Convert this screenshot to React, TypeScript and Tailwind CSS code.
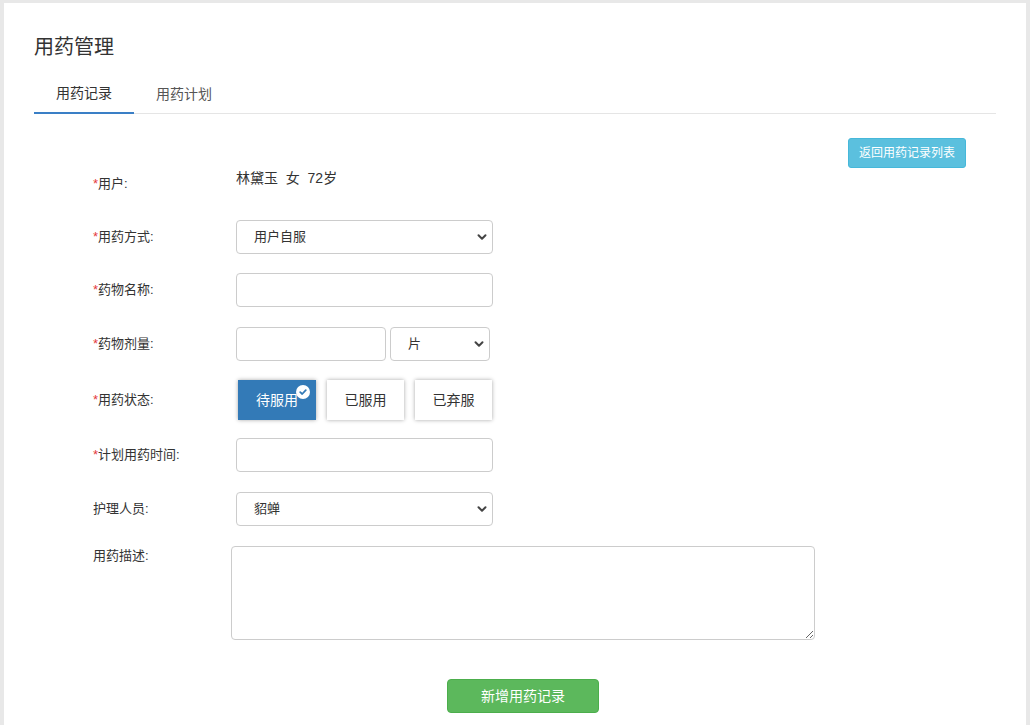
import React from "react";

const font = { fontFamily: '"Liberation Sans", "Noto Sans CJK SC", sans-serif' };

function Chevron() {
  return (
    <svg width="10" height="10" viewBox="0 0 10 10" className="pointer-events-none absolute right-[6px] top-1/2 -translate-y-1/2">
      <path d="M1.5 3.2 L5 6.7 L8.5 3.2" fill="none" stroke="#444" strokeWidth="2" strokeLinecap="round" strokeLinejoin="round" />
    </svg>
  );
}

function Label({ text, req = true }: { text: string; req?: boolean }) {
  return (
    <div className="w-[143px] shrink-0 text-[13px] text-[#333] leading-[20px]">
      {req && <span className="text-[#e4393c]">*</span>}
      {text}:
    </div>
  );
}

function Select({ value, w }: { value: string; w: string }) {
  return (
    <div className={`relative ${w} h-full`}>
      <div className="h-full w-full rounded-[4px] border border-[#ccc] bg-white pl-[17px] flex items-center text-[13px] text-[#333]">
        {value}
      </div>
      <Chevron />
    </div>
  );
}

export default function App() {
  return (
    <div className="min-h-[725px] w-full bg-[#e8e8e8] pt-[3px] px-[4px]" style={font}>
      <div className="min-h-[722px] bg-white px-[30px] pt-[30px]">
        <h1 className="text-[20px] leading-[28px] text-[#333]">用药管理</h1>
        <div className="mt-[13px] flex border-b border-[#e5e5e5]">
          <div className="-mb-px w-[100px] h-[40px] flex items-center justify-center border-b-[2px] border-[#3a7fc6] text-[14px] text-[#333]">
            用药记录
          </div>
          <div className="-mb-px w-[100px] h-[40px] flex items-center justify-center text-[14px] text-[#555]">
            用药计划
          </div>
        </div>

        <div className="flex">
          <div className="flex-1 pl-[59px] pt-[53px]">
            {/* 用户 */}
            <div className="flex items-center h-[34px]">
              <Label text="用户" />
              <div className="-mt-[12px] text-[14px] text-[#333] whitespace-pre">林黛玉  女  72岁</div>
            </div>
            {/* 用药方式 */}
            <div className="flex items-center h-[34px] mt-[19px]">
              <Label text="用药方式" />
              <Select value="用户自服" w="w-[257px]" />
            </div>
            {/* 药物名称 */}
            <div className="flex items-center h-[34px] mt-[19px]">
              <Label text="药物名称" />
              <input className="h-full w-[257px] rounded-[4px] border border-[#ccc] bg-white outline-none" />
            </div>
            {/* 药物剂量 */}
            <div className="flex items-center h-[34px] mt-[20px]">
              <Label text="药物剂量" />
              <input className="h-full w-[150px] rounded-[4px] border border-[#ccc] bg-white outline-none" />
              <div className="ml-[4px] h-full">
                <Select value="片" w="w-[100px]" />
              </div>
            </div>
            {/* 用药状态 */}
            <div className="flex items-center h-[40px] mt-[19px]">
              <Label text="用药状态" />
              <div className="ml-[2px] flex gap-[11px] h-full">
                <div className="relative w-[78px] h-full bg-[#337ab7] text-white text-[14px] flex items-center justify-center shadow-[0_0_4px_rgba(0,0,0,0.35)]">
                  待服用
                  <div className="absolute right-[6px] top-[5px] w-[14px] h-[14px] rounded-full bg-white flex items-center justify-center">
                    <svg width="10" height="10" viewBox="0 0 10 10">
                      <path d="M2.2 5.2 L4.2 7 L7.8 3.2" fill="none" stroke="#337ab7" strokeWidth="1.8" strokeLinecap="round" strokeLinejoin="round" />
                    </svg>
                  </div>
                </div>
                <div className="w-[77px] h-full bg-white text-[#333] text-[14px] flex items-center justify-center shadow-[0_0_4px_rgba(0,0,0,0.35)]">
                  已服用
                </div>
                <div className="w-[77px] h-full bg-white text-[#333] text-[14px] flex items-center justify-center shadow-[0_0_4px_rgba(0,0,0,0.35)]">
                  已弃服
                </div>
              </div>
            </div>
            {/* 计划用药时间 */}
            <div className="flex items-center h-[34px] mt-[18px]">
              <Label text="计划用药时间" />
              <input className="h-full w-[257px] rounded-[4px] border border-[#ccc] bg-white outline-none" />
            </div>
            {/* 护理人员 */}
            <div className="flex items-center h-[34px] mt-[20px]">
              <Label text="护理人员" req={false} />
              <Select value="貂蝉" w="w-[257px]" />
            </div>
            {/* 用药描述 */}
            <div className="flex items-start mt-[20px]">
              <Label text="用药描述" req={false} />
              <textarea className="-ml-[5px] h-[94px] w-[584px] rounded-[4px] border border-[#ccc] bg-white outline-none block" />
            </div>
            <div className="mt-[39px] pl-[354px]">
              <button className="w-[152px] h-[34px] rounded-[4px] bg-[#5cb85c] border border-[#4cae4c] text-white text-[14px]">
                新增用药记录
              </button>
            </div>
          </div>
          <div className="pt-[24px] pr-[30px]">
            <button className="h-[30px] w-[118px] rounded-[3px] bg-[#5bc0de] border border-[#46b8da] text-white text-[12px]">
              返回用药记录列表
            </button>
          </div>
        </div>
      </div>
    </div>
  );
}
